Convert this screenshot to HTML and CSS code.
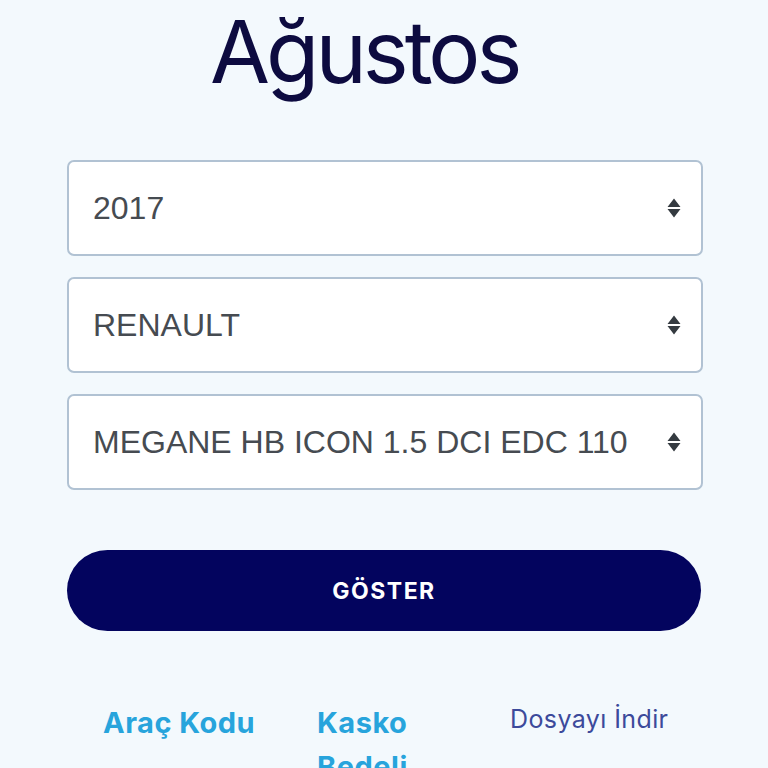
FILE: index.html
```html
<!DOCTYPE html>
<html lang="tr">
<head>
<meta charset="utf-8">
<title>Ağustos</title>
<link rel="stylesheet" href="styles.css">
</head>
<body>
<main class="page">
  <h1 class="title">Ağustos</h1>
  <form class="form">
    <div class="select">
      <span class="select-value">2017</span>
      <svg class="select-arrow" viewBox="0 0 14 20" width="14" height="20"><path d="M7 0.5 L13.5 9 H0.5 Z M7 19.5 L13.5 11 H0.5 Z" fill="#343a40"/></svg>
    </div>
    <div class="select">
      <span class="select-value">RENAULT</span>
      <svg class="select-arrow" viewBox="0 0 14 20" width="14" height="20"><path d="M7 0.5 L13.5 9 H0.5 Z M7 19.5 L13.5 11 H0.5 Z" fill="#343a40"/></svg>
    </div>
    <div class="select">
      <span class="select-value">MEGANE HB ICON 1.5 DCI EDC 110</span>
      <svg class="select-arrow" viewBox="0 0 14 20" width="14" height="20"><path d="M7 0.5 L13.5 9 H0.5 Z M7 19.5 L13.5 11 H0.5 Z" fill="#343a40"/></svg>
    </div>
    <button type="button" class="btn">GÖSTER</button>
  </form>
  <div class="links">
    <a class="link-bold col1">Araç Kodu</a>
    <a class="link-bold col2">Kasko Bedeli</a>
    <a class="link-plain col3">Dosyayı İndir</a>
  </div>
</main>
</body>
</html>
```

FILE: styles.css
```css
html, body {
  margin: 0;
  padding: 0;
  background: #f3f9fd;
}
body {
  font-family: Inter, "Noto Sans", sans-serif;
  height: 768px;
  overflow: hidden;
}
.page {
  padding-left: 67px;
  width: 636px;
}
.title {
  margin: -1px 0 0 143px;
  font-family: Inter, sans-serif;
  font-weight: 400;
  font-size: 87px;
  line-height: normal;
  color: #0d0b40;
  letter-spacing: -4px;
}
.form {
  margin-top: 56px;
  display: flex;
  flex-direction: column;
}
.select {
  box-sizing: border-box;
  height: 96px;
  margin-bottom: 21px;
  background: #fff;
  border: 2px solid #b1c2d3;
  border-radius: 7px;
  display: flex;
  align-items: center;
  justify-content: space-between;
  padding: 0 20px 0 24px;
}
.select-value {
  font-family: "Liberation Sans", Arial, sans-serif;
  font-size: 32px;
  color: #464b51;
}
.select-arrow {
  display: block;
}
.btn {
  margin-top: 39px;
  height: 81px;
  width: 634px;
  border: none;
  border-radius: 41px;
  background: #03045e;
  color: #fff;
  font-family: Inter, sans-serif;
  font-weight: 700;
  font-size: 23px;
  letter-spacing: 1.5px;
}
.links {
  margin-top: 70px;
  display: flex;
  align-items: flex-start;
  padding-left: 36px;
}
.link-bold {
  font-family: Inter, sans-serif;
  font-weight: 700;
  font-size: 29px;
  line-height: 44px;
  letter-spacing: 0.5px;
  color: #27a4dc;
}
.col1 {
  width: 214px;
}
.col2 {
  width: 130px;
  margin-right: 63px;
}
.link-plain {
  margin-top: -4px;
  font-family: Inter, sans-serif;
  font-weight: 400;
  font-size: 25px;
  line-height: 44px;
  letter-spacing: 0.4px;
  color: #3c4a9b;
}
```
